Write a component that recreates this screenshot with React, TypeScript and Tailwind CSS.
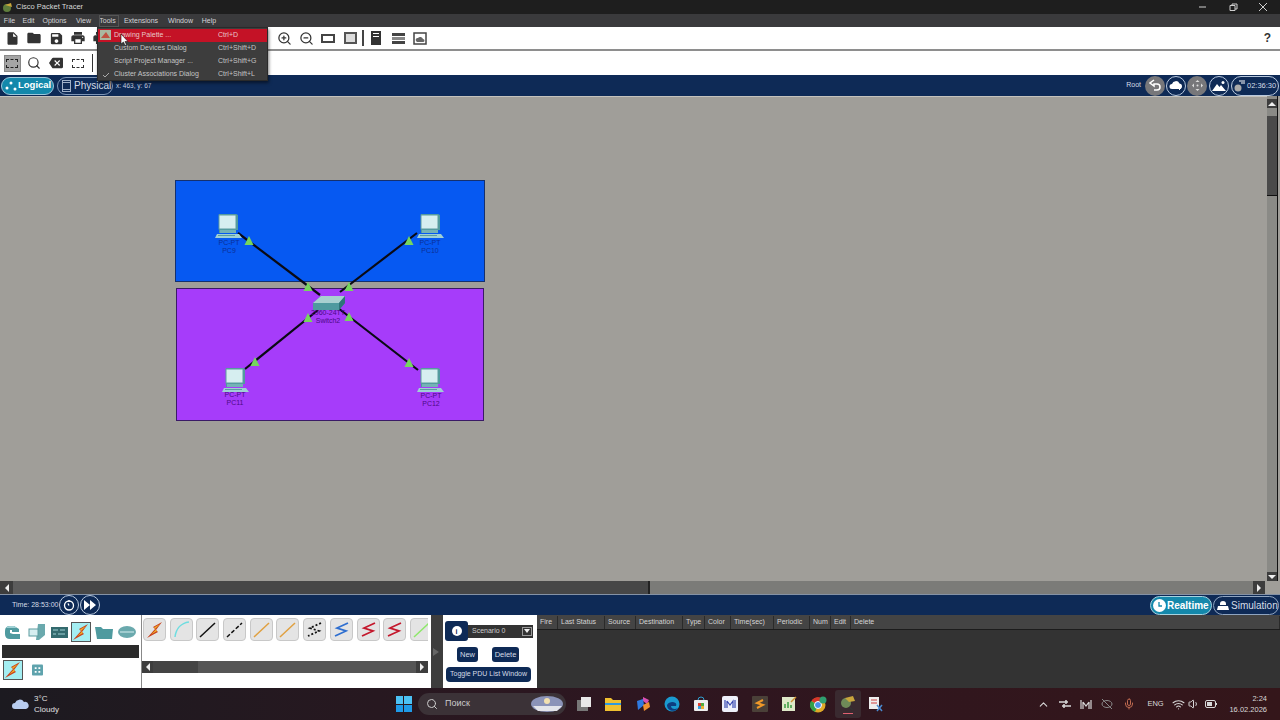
import type { ReactNode } from "react"
import { ChevronUp, Mic, Search, Volume1, Wifi, ZoomIn, ZoomOut } from "lucide-react"
import { MdBackspace, MdFolder, MdInsertDriveFile, MdPrint, MdSave } from "react-icons/md"

const menuItems = [
  { label: "File", w: "w-[19px]" },
  { label: "Edit", w: "w-[19px]" },
  { label: "Options", w: "w-[33px]" },
  { label: "View", w: "w-[25px]" },
  { label: "Tools", w: "w-[23px]" },
  { label: "Extensions", w: "w-[44px]" },
  { label: "Window", w: "w-[35px]" },
  { label: "Help", w: "w-[22px]" },
]

const dropdown = [
  { label: "Drawing Palette ...", keys: "Ctrl+D" },
  { label: "Custom Devices Dialog", keys: "Ctrl+Shift+D" },
  { label: "Script Project Manager ...", keys: "Ctrl+Shift+G" },
  { label: "Cluster Associations Dialog", keys: "Ctrl+Shift+L" },
]

const pduColumns = [
  { label: "Fire", w: "w-[21px]" },
  { label: "Last Status", w: "w-[47px]" },
  { label: "Source", w: "w-[31px]" },
  { label: "Destination", w: "w-[47px]" },
  { label: "Type", w: "w-[22px]" },
  { label: "Color", w: "w-[26px]" },
  { label: "Time(sec)", w: "w-[43px]" },
  { label: "Periodic", w: "w-[36px]" },
  { label: "Num", w: "w-[21px]" },
  { label: "Edit", w: "w-[20px]" },
  { label: "Delete", w: "flex-1" },
]

function ToolBtn({ children }: { children: ReactNode }) {
  return <div className="flex h-full w-[22px] shrink-0 items-center justify-center text-[#333]">{children}</div>
}

function Bolt({ size = 18 }: { size?: number }) {
  return (
    <svg width={size} height={size} viewBox="0 0 18 18">
      <path d="M16 1 7 6l2 2-8 9 11-6-2-2z" fill="#c8401c" />
      <path d="M14 3 8 6.500l2 2-5 5 6-3.500-2-2z" fill="#f0b429" />
    </svg>
  )
}

function Pc({ x, y }: { x: number; y: number }) {
  return (
    <g transform={`translate(${x} ${y})`}>
      <path d="M4 1h17l2 1v15H21v3H4z" fill="#4f9a9f" />
      <rect x="4" y="2" width="17" height="14" fill="#d6eef0" stroke="#5c9ca0" />
      <path d="M5 17h16v3H5z" fill="#74b2b6" />
      <path d="M2 21h22l3 4H0z" fill="#9fd0d4" />
      <path d="M3 22.500h17" stroke="#5c9ca0" />
    </g>
  )
}

function Tri({ x, y }: { x: number; y: number }) {
  return <path d={`M${x} ${y - 5}l4.500 9h-9z`} fill="#75d65e" />
}

function Diagram() {
  return (
    <div className="relative min-w-0 flex-1 overflow-hidden border-t border-[#c4c2bd] bg-[#a09e99] text-[7px] leading-[8px]">
      <div className="absolute left-[175px] top-[83px] h-[102px] w-[310px] border border-[#15306e] bg-[#0659f2]" />
      <div className="absolute left-[176px] top-[191px] h-[133px] w-[308px] border border-[#3a1a66] bg-[#a63cfa]" />
      <svg className="absolute left-0 top-[-1px]" width="1267" height="485" viewBox="0 96 1267 485">
        <g stroke="#0a0a14" strokeWidth="2.200">
          <path d="M238 233 320 295" />
          <path d="M417 233 340 292" />
          <path d="M245 369 318 310" />
          <path d="M418 370 338 308" />
        </g>
        <Pc x={215} y={213} />
        <Pc x={417} y={213} />
        <Pc x={222} y={367} />
        <Pc x={417} y={367} />
        <path d="M313 303l8-7h24v7l-6 7h-26z" fill="#4f9a9f" />
        <path d="M313 303l8-7h24l-6 7z" fill="#a8d0d0" />
        <path d="M339 303l6-7v7l-6 7z" fill="#2f7479" />
        <Tri x={249} y={241} />
        <Tri x={409} y={241} />
        <Tri x={308} y={287} />
        <Tri x={349} y={287} />
        <Tri x={308} y={318} />
        <Tri x={349} y={317} />
        <Tri x={255} y={362} />
        <Tri x={409} y={363} />
      </svg>
      <div className="absolute left-[229px] top-[142px] -translate-x-1/2 text-center text-[#0b2f96]">PC-PT<br />PC9</div>
      <div className="absolute left-[430px] top-[142px] -translate-x-1/2 text-center text-[#0b2f96]">PC-PT<br />PC10</div>
      <div className="absolute left-[235px] top-[294px] -translate-x-1/2 text-center text-[#4c0a86]">PC-PT<br />PC11</div>
      <div className="absolute left-[431px] top-[295px] -translate-x-1/2 text-center text-[#4c0a86]">PC-PT<br />PC12</div>
      <div className="absolute left-[328px] top-[212px] -translate-x-1/2 whitespace-nowrap text-center text-[#4c0a86]">2960-24TT<br />Switch2</div>
    </div>
  )
}

function ArrowBox({ d, className }: { d: string; className?: string }) {
  return (
    <div className={`flex shrink-0 items-center justify-center bg-[#3d3d3d] ${className ?? ""}`}>
      <svg width="8" height="8" viewBox="0 0 8 8"><path d={d} fill="#eee" /></svg>
    </div>
  )
}

function CircleBtn({ gray, children }: { gray?: boolean; children: ReactNode }) {
  return (
    <div className={gray
      ? "flex h-[20px] w-[20px] shrink-0 items-center justify-center rounded-full bg-[#77777a] text-white"
      : "flex h-[20px] w-[20px] shrink-0 items-center justify-center rounded-full border border-[#b9c9de] text-white"}>
      {children}
    </div>
  )
}

function ConnBtn({ children }: { children: ReactNode }) {
  return (
    <div className="flex h-[23px] w-[23px] shrink-0 items-center justify-center overflow-hidden rounded-[4px] border border-[#c8c8c8] bg-[#e4e4e4]">
      {children}
    </div>
  )
}

function Line({ color, dash }: { color: string; dash?: string }) {
  return (
    <svg width="19" height="19" viewBox="0 0 19 19">
      <path d="M2 17 17 3" stroke={color} strokeWidth="1.500" strokeDasharray={dash} fill="none" />
    </svg>
  )
}

function Zig({ color }: { color: string }) {
  return (
    <svg width="19" height="19" viewBox="0 0 19 19">
      <path d="M16 3 5 8l9 3-11 5" stroke={color} strokeWidth="1.800" fill="none" />
    </svg>
  )
}

function TealIcon({ children }: { children: ReactNode }) {
  return (
    <svg width="20" height="20" viewBox="0 0 20 20" className="shrink-0">
      {children}
    </svg>
  )
}

export default function App() {
  return (
    <div className="relative flex h-[720px] w-[1280px] flex-col overflow-hidden bg-white font-['Liberation_Sans',sans-serif]">
      {/* title bar */}
      <div className="flex h-[14px] shrink-0 items-center bg-[#1e1e1e] pl-[2px] text-[#d8d8d8]">
        <svg width="11" height="11" viewBox="0 0 11 11">
          <circle cx="5" cy="6" r="4" fill="#5f7d3c" />
          <path d="M3 3 9 1l1 4z" fill="#c9a63c" />
        </svg>
        <span className="ml-[3px] text-[7.500px]">Cisco Packet Tracer</span>
        <div className="ml-auto mr-[2px] flex items-center text-[#cfcfcf]">
          <svg width="30" height="10" viewBox="0 0 30 10"><path d="M11 5h7" stroke="currentColor" /></svg>
          <svg width="30" height="10" viewBox="0 0 30 10"><path d="M12 3.500h5v5h-5zM14 3.500V2h5v5h-2" stroke="currentColor" fill="none" /></svg>
          <svg width="30" height="10" viewBox="0 0 30 10"><path d="M11 1l8 8M19 1l-8 8" stroke="currentColor" /></svg>
        </div>
      </div>

      {/* menu bar */}
      <div className="flex h-[13px] shrink-0 items-center bg-[#3a3a3c] pt-[1px] text-[7px] text-[#d4d4d8]">
        {menuItems.map((m) => (
          <div key={m.label} className={`${m.w} text-center`}>{m.label}</div>
        ))}
      </div>

      {/* main toolbar */}
      <div className="flex h-[24px] shrink-0 items-center border-b-2 border-[#8e8e8e] bg-white pl-[1px]">
        <ToolBtn><MdInsertDriveFile size={15} /></ToolBtn>
        <ToolBtn><MdFolder size={16} /></ToolBtn>
        <ToolBtn><MdSave size={15} /></ToolBtn>
        <ToolBtn><MdPrint size={16} /></ToolBtn>
        <ToolBtn><MdPrint size={16} /></ToolBtn>
        <div className="ml-[162px] flex h-full items-center">
          <ToolBtn><ZoomIn size={15} /></ToolBtn>
          <ToolBtn><ZoomOut size={15} /></ToolBtn>
          <ToolBtn><div className="h-[9px] w-[14px] border-2 border-[#444]" /></ToolBtn>
          <ToolBtn><div className="h-[12px] w-[13px] border-2 border-[#555] bg-[#ddd]" /></ToolBtn>
          <div className="mx-[1px] h-[16px] w-[2px] bg-[#444]" />
          <ToolBtn><div className="flex h-[14px] w-[10px] flex-col gap-[2px] bg-[#333] px-[2px] pt-[2px]"><div className="h-[1px] bg-white" /><div className="h-[1px] bg-white" /></div></ToolBtn>
          <ToolBtn><div className="flex w-[13px] flex-col gap-[1px]"><div className="h-[3px] bg-[#444]" /><div className="h-[3px] bg-[#888]" /><div className="h-[3px] bg-[#444]" /></div></ToolBtn>
          <ToolBtn>
            <svg width="14" height="13" viewBox="0 0 14 13"><rect x="1" y="1" width="12" height="11" fill="none" stroke="#444" strokeWidth="1.500" /><path d="M3 9a2 2 0 0 1 2-3 3 3 0 0 1 5 1 1.500 1.500 0 0 1 0 3H4z" fill="#666" /></svg>
          </ToolBtn>
        </div>
        <span className="ml-auto mr-[9px] text-[12px] font-bold text-[#333]">?</span>
      </div>

      {/* second toolbar */}
      <div className="flex h-[24px] shrink-0 items-center bg-white pl-[1px]">
        <ToolBtn>
          <div className="flex h-[17px] w-[17px] items-center justify-center border border-[#888] bg-[#a5a5a5]">
            <div className="h-[9px] w-[12px] border border-dashed border-[#222]" />
          </div>
        </ToolBtn>
        <ToolBtn><Search size={14} /></ToolBtn>
        <ToolBtn><MdBackspace size={14} /></ToolBtn>
        <ToolBtn><div className="h-[9px] w-[12px] border border-dashed border-[#333]" /></ToolBtn>
        <div className="ml-[3px] h-[18px] w-[1px] bg-[#333]" />
      </div>

      {/* logical / physical bar */}
      <div className="flex h-[21px] shrink-0 items-center bg-[#0e2a56] text-white">
        <div className="ml-[1px] flex h-[18px] w-[53px] items-center gap-[1px] rounded-full border border-[#9cc8dc] bg-[#1488ab] pl-[3px] text-[9.500px] font-bold">
          <svg width="12" height="12" viewBox="0 0 12 12" fill="white" className="shrink-0"><circle cx="2" cy="8" r="1.500" /><circle cx="6" cy="3" r="1.500" /><circle cx="10" cy="9" r="1.500" /></svg>
          Logical
        </div>
        <div className="ml-[3px] flex h-[18px] w-[56px] items-center gap-[3px] rounded-full border border-[#7f97b8] pl-[4px] text-[10px] text-[#d5dce6]">
          <div className="flex h-[12px] w-[9px] shrink-0 flex-col justify-between border border-[#9fb0c8] py-[1px]"><div className="h-px bg-[#9fb0c8]" /><div className="h-px bg-[#9fb0c8]" /></div>
          Physical
        </div>
        <span className="ml-[3px] text-[6.500px] text-[#c9d2e0]">x: 463, y: 67</span>
        <span className="ml-auto text-[7px] text-[#d5dce6]">Root</span>
        <div className="ml-[4px] flex items-center gap-[1px]">
          <CircleBtn gray>
            <svg width="13" height="13" viewBox="0 0 13 13"><path d="M5 1 1 4l4 3V5h3a3 3 0 0 1 0 6H5" stroke="#fff" strokeWidth="1.500" fill="none" /></svg>
          </CircleBtn>
          <CircleBtn>
            <svg width="14" height="12" viewBox="0 0 14 12"><path d="M3 9a2.500 2.500 0 0 1 0-5 4 4 0 0 1 7.500-.5A2.800 2.800 0 0 1 11 9z" fill="#fff" /><path d="M9 8h1V7h1v1h1v1h-1v1h-1V9H9z" fill="#fff" /></svg>
          </CircleBtn>
          <CircleBtn gray>
            <svg width="13" height="13" viewBox="0 0 13 13" fill="#ddd"><path d="m6.500 1 2 2h-4zM6.500 12l2-2h-4zM1 6.500l2-2v4zM12 6.500l-2-2v4z" /><circle cx="6.500" cy="6.500" r="1" /></svg>
          </CircleBtn>
          <div className="ml-[1px]">
            <CircleBtn>
              <svg width="14" height="12" viewBox="0 0 14 12" fill="#fff"><path d="M0 11 5 4l2.500 3L9 5l5 6z" /><circle cx="11" cy="2.500" r="1.500" /></svg>
            </CircleBtn>
          </div>
        </div>
        <div className="ml-[2px] mr-[1px] flex h-[20px] w-[48px] items-center rounded-full border border-[#b9c9de] pl-[2px] text-[7.500px] text-[#d5dce6]">
          <svg width="11" height="12" viewBox="0 0 11 12" className="shrink-0"><circle cx="4" cy="8" r="3.500" fill="#aaa" /><path d="M5 1h6M7 3h4" stroke="#fff" /></svg>
          <span className="ml-[2px]">02:36:30</span>
        </div>
      </div>

      {/* workspace */}
      <div className="flex h-[498px] shrink-0 flex-col bg-[#a09e99]">
        <div className="flex min-h-0 flex-1">
          <Diagram />
          <div className="mr-[2px] flex w-[11px] shrink-0 flex-col border-r border-[#111] bg-[#8a8a86]">
            <ArrowBox d="M4 2 8 6H0z" className="mt-[3px] h-[9px]" />
            <div className="mt-[8px] h-[80px] shrink-0 border-b border-[#111] bg-[#4a4a4a]" />
            <ArrowBox d="M0 2h8L4 6z" className="mt-auto h-[9px]" />
          </div>
        </div>
        <div className="flex h-[13px] shrink-0 items-center bg-[#a09e99]">
          <ArrowBox d="M6 0v8L2 4z" className="h-full w-[13px]" />
          <div className="h-full w-[47px] bg-[#5c5c5c]" />
          <div className="h-full w-[590px] border-r-2 border-[#222] bg-[#474747]" />
          <div className="h-full w-[603px] bg-[#7b7b78]" />
          <ArrowBox d="M2 0v8l4-4z" className="h-full w-[12px]" />
        </div>
      </div>

      {/* time bar */}
      <div className="flex h-[21px] shrink-0 items-center border-t border-[#8592a5] bg-[#0e2a56] text-white">
        <span className="ml-[12px] w-[47px] whitespace-nowrap text-[7px] text-[#d5dce6]">Time: 28:53:00</span>
        <CircleBtn>
          <svg width="12" height="12" viewBox="0 0 12 12" fill="none" stroke="#fff" strokeWidth="1.300"><circle cx="6" cy="6.500" r="4.500" /><path d="M6 1v2M5 4.500l1 2" /></svg>
        </CircleBtn>
        <div className="ml-[1px]">
          <CircleBtn>
            <svg width="14" height="10" viewBox="0 0 14 10" fill="#fff"><path d="M1 0l6 5-6 5zM7 0l6 5-6 5z" /></svg>
          </CircleBtn>
        </div>
        <div className="ml-auto flex h-[19px] w-[62px] items-center rounded-full border border-[#a6d3e0] bg-[#1488ab] pl-[2px] text-[10px] font-bold">
          <div className="mr-[1px] flex h-[13px] w-[13px] items-center justify-center rounded-full bg-white">
            <svg width="9" height="9" viewBox="0 0 9 9" fill="none" stroke="#1488ab" strokeWidth="1.300"><path d="M4 1v4h3" /></svg>
          </div>
          Realtime
        </div>
        <div className="ml-[1px] mr-[1px] flex h-[19px] w-[66px] items-center rounded-full border border-[#8fa4c0] pl-[2px] text-[10px] text-[#d5dce6]">
          <svg width="14" height="14" viewBox="0 0 14 14" fill="#fff" className="mr-[1px] shrink-0"><path d="M4 6a3 3 0 0 1 6 0v1H4zM2 8h10l1 4H1z" /></svg>
          Simulation
        </div>
      </div>

      {/* bottom panel */}
      <div className="flex h-[73px] shrink-0 bg-white">
        <div className="w-[141px] shrink-0">
          <div className="flex h-[27px] items-center pl-[3px] pt-[6px]">
            <TealIcon><path d="M2 9q0-5 5-5h4l5 3v3h-7V8H7v3l3 1h7v5H7q-5 0-5-5z" fill="#4f9a9f" /><path d="M3 6q1-2 4-2h4l3 2z" fill="#9fd0d4" /></TealIcon>
            <div className="ml-[4px]"><TealIcon><path d="M11 2h7v11l-6 5h-3z" fill="#6aa9ad" /><rect x="2" y="7" width="9" height="7" fill="#d6eef0" stroke="#5c9ca0" /></TealIcon></div>
            <div className="ml-[2px]"><TealIcon><rect x="2" y="5" width="17" height="11" fill="#336a6e" /><path d="M4 8h5M11 8h5M4 12h3M9 12h7" stroke="#9fd0d4" /></TealIcon></div>
            <div className="ml-[2px] flex h-[20px] w-[20px] shrink-0 items-center justify-center border border-[#555] bg-[#a4eef2]"><Bolt /></div>
            <div className="ml-[3px]"><TealIcon><path d="M1 5h6l2 2h10l-1 10H3z" fill="#4f9a9f" /></TealIcon></div>
            <div className="ml-[3px]"><TealIcon><ellipse cx="10" cy="10" rx="9" ry="6" fill="#6aa9ad" /><path d="M3 10h14" stroke="#d6eef0" /></TealIcon></div>
          </div>
          <div className="mx-[2px] mt-[3px] h-[13px] bg-[#2b2b2b]" />
          <div className="mt-[2px] flex items-center gap-[9px] pl-[3px]">
            <div className="flex h-[20px] w-[20px] items-center justify-center border border-[#555] bg-[#a4eef2]"><Bolt /></div>
            <svg width="11" height="12" viewBox="0 0 12 12"><rect width="12" height="12" rx="1" fill="#5fa3ad" /><path d="M3 3h2v2H3zM7 3h2v2H7zM3 7h2v2H3zM7 7h2v2H7z" fill="#fff" /></svg>
          </div>
        </div>

        <div className="flex w-[287px] shrink-0 flex-col border-l border-[#888]">
          <div className="flex h-[46px] gap-[3.700px] overflow-hidden pl-[1px] pt-[3px]">
            <ConnBtn><Bolt /></ConnBtn>
            <ConnBtn><svg width="19" height="19" viewBox="0 0 19 19"><path d="M3 17C4 9 9 3 17 2" stroke="#6fdde0" strokeWidth="1.500" fill="none" /></svg></ConnBtn>
            <ConnBtn><Line color="#111" /></ConnBtn>
            <ConnBtn><Line color="#111" dash="4 2" /></ConnBtn>
            <ConnBtn><Line color="#e0a040" /></ConnBtn>
            <ConnBtn><Line color="#e0a040" /></ConnBtn>
            <ConnBtn><svg width="19" height="19" viewBox="0 0 19 19"><path d="M16 3 5 8l9 3-11 5" stroke="#111" strokeWidth="1.800" strokeDasharray="2 2" fill="none" /></svg></ConnBtn>
            <ConnBtn><Zig color="#2f6fd0" /></ConnBtn>
            <ConnBtn><Zig color="#c4182c" /></ConnBtn>
            <ConnBtn><Zig color="#c4182c" /></ConnBtn>
            <ConnBtn><Line color="#8ee86a" /></ConnBtn>
          </div>
          <div className="flex h-[12px] items-center bg-[#555]">
            <ArrowBox d="M6 0v8L2 4z" className="h-full w-[11px]" />
            <div className="h-full w-[45px] bg-[#444]" />
            <div className="flex-1" />
            <ArrowBox d="M2 0v8l4-4z" className="h-full w-[12px]" />
          </div>
        </div>

        <div className="flex w-[15px] shrink-0 items-center border-l-[3px] border-white bg-[#3d3d3d] pl-[2px]">
          <svg width="6" height="8" viewBox="0 0 6 8"><path d="M0 0l6 4-6 4z" fill="#666" /></svg>
        </div>

        <div className="flex w-[94px] shrink-0 flex-col">
          <div className="mt-[6px] flex items-center pl-[2px]">
            <div className="flex h-[20px] w-[23px] items-center justify-center rounded-[3px] bg-[#0e2a56]">
              <div className="flex h-[10px] w-[10px] items-center justify-center rounded-full bg-white text-[7px] font-bold leading-none text-[#0e2a56]">i</div>
            </div>
            <div className="flex h-[13px] w-[65px] items-center justify-between bg-[#333] pl-[4px] pr-[1px] text-[7px] text-[#ccc]">
              Scenario 0
              <div className="flex h-[9px] w-[10px] items-center justify-center border border-[#999]"><svg width="6" height="4" viewBox="0 0 6 4"><path d="M0 0h6L3 4z" fill="#eee" /></svg></div>
            </div>
          </div>
          <div className="ml-[14px] mt-[6px] flex gap-[14px]">
            <div className="flex h-[15px] w-[21px] items-center justify-center rounded-[3px] bg-[#0e2a56] text-[7.500px] text-[#d5dce6]">New</div>
            <div className="flex h-[15px] w-[27px] items-center justify-center rounded-[3px] bg-[#0e2a56] text-[7.500px] text-[#d5dce6]">Delete</div>
          </div>
          <div className="ml-[3px] mt-[5px] flex h-[15px] w-[85px] items-center justify-center whitespace-nowrap rounded-[4px] bg-[#0e2a56] text-[7px] text-[#d5dce6]">Toggle PDU List Window</div>
        </div>

        <div className="flex min-w-0 flex-1 flex-col bg-[#333]">
          <div className="flex h-[15px] shrink-0 border-b border-[#1c1c1c] bg-[#444] pt-[1px] text-[7px] text-[#d4d4d4]">
            {pduColumns.map((c) => (
              <div key={c.label} className={`${c.w} flex items-center whitespace-nowrap border-r border-[#2a2a2a] pl-[3px]`}>{c.label}</div>
            ))}
          </div>
        </div>
      </div>

      {/* windows taskbar */}
      <div className="flex h-[32px] shrink-0 items-center bg-gradient-to-r from-[#1c1a20] via-[#2e1620] to-[#34161a] text-[#e0e0e0]">
        <svg width="22" height="14" viewBox="0 0 22 14" className="ml-[10px] shrink-0"><path d="M5 12a3 3 0 0 1 0-6 5 5 0 0 1 9-1 3.500 3.500 0 0 1 2 7z" fill="#b9cdf0" /></svg>
        <div className="ml-[2px] text-[8px] leading-[11px]">3°C<br />Cloudy</div>
        <div className="ml-[337px] grid h-[16px] w-[16px] shrink-0 grid-cols-2 gap-[1px]">
          <div className="bg-[#4cc2f5]" /><div className="bg-[#4cc2f5]" /><div className="bg-[#1f9ae8]" /><div className="bg-[#1f9ae8]" />
        </div>
        <div className="ml-[6px] flex h-[22px] w-[148px] shrink-0 items-center rounded-full bg-[#3b3237] pl-[8px] text-[9px] text-[#ccc]">
          <Search size={12} />
          <span className="ml-[7px]">Поиск</span>
          <svg width="33" height="18" viewBox="0 0 33 18" className="ml-auto mr-[2px]"><ellipse cx="16" cy="9" rx="16" ry="8" fill="#8b93b8" /><path d="M2 11h29l-5 5H7z" fill="#e3e4ea" /><circle cx="16" cy="6" r="3" fill="#f2e0b0" /></svg>
        </div>
        <div className="ml-[10px] flex items-center gap-[13.300px]">
          <svg width="16" height="16" viewBox="0 0 16 16"><rect x="1" y="4" width="11" height="11" fill="#777" /><rect x="5" y="1" width="10" height="10" fill="#e8e8e8" /></svg>
          <svg width="16" height="16" viewBox="0 0 16 16"><path d="M0 2h6l2 2h8v11H0z" fill="#f0c030" /><path d="M0 7h16v2H0z" fill="#2f9ae0" /></svg>
          <svg width="16" height="16" viewBox="0 0 16 16"><path d="M8 1 14 4 12 8 8 5z" fill="#d94fb0" /><path d="M2 5 8 3l1 6-6 5z" fill="#2f7ae0" /><path d="M8 9l6-3 1 5-6 4z" fill="#f09030" /></svg>
          <svg width="16" height="16" viewBox="0 0 16 16"><circle cx="8" cy="8" r="7.500" fill="#1a9ad0" /><path d="M3 9c3-5 11-3 9 1H7c0 3 4 4 7 2-3 5-11 3-11-3z" fill="#0d3d80" /></svg>
          <svg width="16" height="16" viewBox="0 0 16 16"><rect x="1" y="4" width="14" height="11" rx="1" fill="#eee" /><path d="M5 4a3 3 0 0 1 6 0" stroke="#2fa0d0" fill="none" /><rect x="5" y="7" width="3" height="3" fill="#e04030" /><rect x="8" y="7" width="3" height="3" fill="#50b040" /><rect x="5" y="10" width="3" height="3" fill="#30a0e0" /><rect x="8" y="10" width="3" height="3" fill="#f0b030" /></svg>
          <svg width="16" height="16" viewBox="0 0 16 16"><rect width="16" height="16" rx="2" fill="#eef0fa" /><path d="M3 4v8M13 4v8M5 5l3 4 3-4v7M5 5v7" stroke="#3848b0" strokeWidth="1.200" fill="none" /></svg>
          <svg width="16" height="16" viewBox="0 0 16 16"><rect width="16" height="16" rx="1" fill="#4a4038" /><path d="M11 4 5 7l6 2-6 3" stroke="#f09828" strokeWidth="2" fill="none" /></svg>
          <svg width="16" height="16" viewBox="0 0 16 16"><rect x="1" y="1" width="13" height="14" fill="#dfe8c8" /><path d="M4 12V8M7 12V6M10 12V9" stroke="#3a9a40" strokeWidth="1.500" /><path d="M10 6l5-5" stroke="#d09030" strokeWidth="1.500" /></svg>
          <svg width="17" height="17" viewBox="0 0 17 17"><circle cx="8" cy="9" r="7.500" fill="#e0a828" /><path d="M8 9 1.500 5A7.500 7.500 0 0 1 14.500 5z" fill="#d8352a" /><path d="M8 9 5 16A7.500 7.500 0 0 1 1 5z" fill="#34a04a" /><circle cx="8" cy="9" r="3.500" fill="#4a90e8" stroke="#fff" /><circle cx="13" cy="4" r="3.500" fill="#2f9e70" /></svg>
          <div className="-mx-[6px] flex h-[28px] w-[26px] flex-col items-center justify-center rounded-[3px] bg-[#3a2a30]">
            <svg width="16" height="16" viewBox="0 0 16 16"><circle cx="6" cy="8" r="5" fill="#6f8a58" /><path d="M5 3l8-2 2 5-6 1z" fill="#c9a63c" /><path d="M9 12l4 3" stroke="#333" strokeWidth="1.500" /></svg>
            <div className="mt-[2px] h-[1px] w-[10px] bg-[#e06070]" />
          </div>
          <svg width="16" height="16" viewBox="0 0 16 16"><rect x="1" y="1" width="10" height="12" fill="#eee" /><path d="M3 4h6M3 7h6" stroke="#d04040" /><path d="M9 9l5 6M14 9l-5 6" stroke="#4a8ad0" strokeWidth="1.500" /></svg>
        </div>
        <div className="ml-auto flex items-center text-[#d8d8d8]">
          <ChevronUp size={13} />
          <svg width="12" height="10" viewBox="0 0 12 10" className="ml-[9px]" fill="none" stroke="currentColor" strokeWidth="1.500"><path d="M0 3h9M3 7h9M7 1v4M5 5v4" /></svg>
          <svg width="12" height="9" viewBox="0 0 12 9" className="ml-[9px]" fill="none" stroke="currentColor" strokeWidth="1.200"><path d="M1 0v9M11 0v9M3 2l3 4 3-4M3 2v7M9 2v7" /></svg>
          <svg width="12" height="10" viewBox="0 0 12 10" className="ml-[9px]" fill="none" stroke="#8a8a8a"><ellipse cx="6" cy="5" rx="5" ry="3.500" /><path d="M1 0l10 10" /></svg>
          <Mic size={12} className="ml-[10px] text-[#c06a50]" />
          <span className="ml-[12px] w-[22px] text-[7.500px]">ENG</span>
          <Wifi size={13} className="ml-[3px]" />
          <Volume1 size={12} className="ml-[3px]" />
          <svg width="12" height="8" viewBox="0 0 12 8" className="ml-[5px]"><rect x="0.500" y="0.500" width="10" height="7" rx="1.500" fill="none" stroke="currentColor" /><rect x="2" y="2" width="5" height="4" fill="currentColor" /><rect x="11" y="3" width="1" height="2" fill="currentColor" /></svg>
          <div className="ml-[12px] mr-[13px] text-right text-[7.500px] leading-[11px]">2:24<br />16.02.2026</div>
        </div>
      </div>

      {/* tools dropdown */}
      <div className="absolute left-[97px] top-[27px] h-[54px] w-[171px] border border-[#2a2a2a] bg-[#3d3d3d] pt-[1px] text-[7px] text-[#c4c4c4] shadow-[1px_2px_3px_rgba(0,0,0,0.5)]">
        {dropdown.map((d, i) => (
          <div key={d.label} className={i === 0
            ? "flex h-[13px] items-center bg-[#c41226] pl-[16px] text-[#e8c8c8]"
            : "flex h-[13px] items-center pl-[16px]"}>
            <span className="w-[104px] whitespace-nowrap">{d.label}</span>
            <span className="whitespace-nowrap">{d.keys}</span>
          </div>
        ))}
        <svg width="11" height="10" viewBox="0 0 11 10" className="absolute left-[2px] top-[2px]"><rect width="11" height="10" fill="#aab8a0" /><path d="M1 8 6 2l4 6z" fill="#c05040" /></svg>
        <svg width="6" height="4" viewBox="0 0 6 4" className="absolute left-[5px] top-[45px]"><path d="M0 2l2 2 4-4" stroke="#aaa" fill="none" /></svg>
      </div>
      <div className="absolute left-[99px] top-[15px] h-[12px] w-[20px] border border-[#555]" />
      <svg width="9" height="12" viewBox="0 0 9 12" className="absolute left-[120px] top-[34px]"><path d="M1 0v10l2.500-2 1.500 3.500 1.500-.7L5 7.500h3z" fill="#fff" stroke="#111" strokeWidth="0.600" /></svg>
    </div>
  )
}
